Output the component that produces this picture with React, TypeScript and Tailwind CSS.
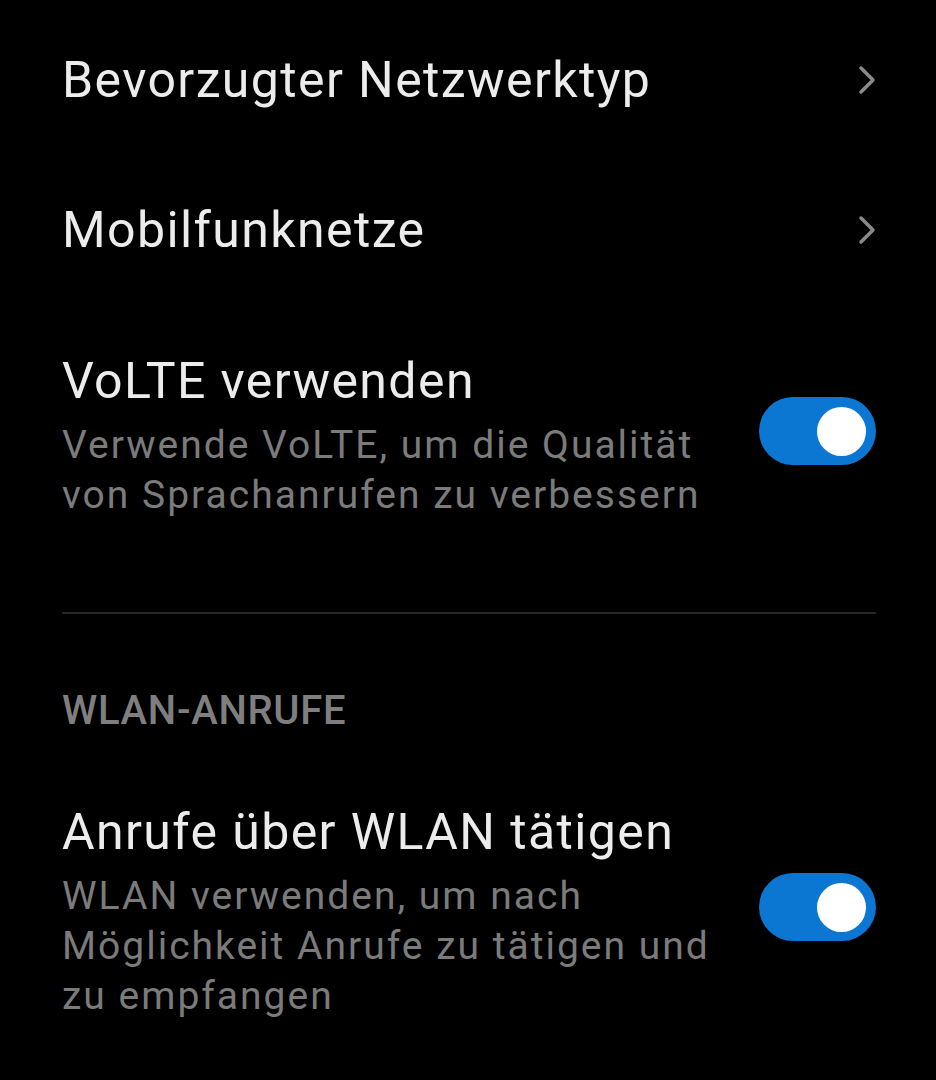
import React from 'react';

const Chevron = () => (
  <svg width="18" height="30" viewBox="0 0 18 30" fill="none" className="shrink-0">
    <path d="M3 3 L15 15 L3 27" stroke="#8a8a8a" strokeWidth="3.5" strokeLinecap="round" strokeLinejoin="round" />
  </svg>
);

const Toggle = ({ className = '' }: { className?: string }) => (
  <div className={`relative w-[117px] h-[68px] rounded-full bg-[#0b77d2] shrink-0 ${className}`}>
    <span className="absolute right-[10px] top-[9.5px] w-[49px] h-[49px] rounded-full bg-white" />
  </div>
);

const NavRow = ({ title, className = '' }: { title: string; className?: string }) => (
  <div className={`flex items-center justify-between h-[60px] ${className}`}>
    <span className="text-[50px] leading-[60px] tracking-[1.4px] text-[#ececec]">{title}</span>
    <Chevron />
  </div>
);

const SwitchRow = ({ title, lines, className = '' }: { title: string; lines: string[]; className?: string }) => (
  <div className={`flex items-center justify-between ${className}`}>
    <div className="flex flex-col">
      <span className="text-[50px] leading-[60px] tracking-[1.4px] text-[#ececec] whitespace-nowrap">{title}</span>
      <p className="mt-[9px] text-[39px] leading-[50px] tracking-[2px] text-[#7b7b7b]">
        {lines.map((l, i) => (
          <span key={i} className="block whitespace-nowrap">{l}</span>
        ))}
      </p>
    </div>
    <Toggle className="mb-[9px]" />
  </div>
);

export default function App() {
  return (
    <div
      className="w-[936px] h-[1080px] bg-black pl-[62px] pr-[60px] overflow-hidden"
      style={{ fontFamily: 'Roboto, "Noto Sans", sans-serif' }}
    >
      <div className="flex flex-col pt-[50px]">
        <NavRow title="Bevorzugter Netzwerktyp" />
        <NavRow title="Mobilfunknetze" className="mt-[90px]" />
        <SwitchRow
          className="mt-[91px]"
          title="VoLTE verwenden"
          lines={['Verwende VoLTE, um die Qualität', 'von Sprachanrufen zu verbessern']}
        />
        <div className="mt-[92px] h-[2px] bg-[#262626]" />
        <div className="mt-[72px] text-[40px] leading-[50px] tracking-[0.7px] font-medium text-[#7f7f7f]">WLAN-ANRUFE</div>
        <SwitchRow
          className="mt-[66px]"
          title="Anrufe über WLAN tätigen"
          lines={['WLAN verwenden, um nach', 'Möglichkeit Anrufe zu tätigen und', 'zu empfangen']}
        />
      </div>
    </div>
  );
}
